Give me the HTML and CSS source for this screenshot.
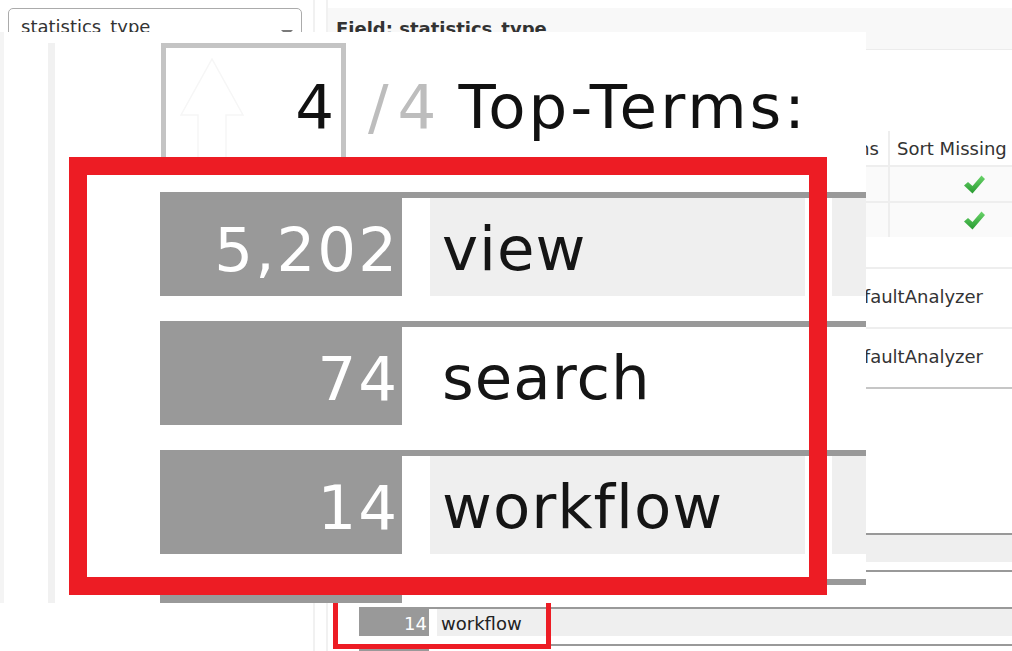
FILE: index.html
```html
<!DOCTYPE html>
<html lang="en">
<head>
<meta charset="utf-8">
<title>Schema Browser – statistics_type</title>
<link rel="stylesheet" href="styles.css">
</head>
<body>
<div class="page">
  <aside class="sidebar">
    <div class="select"><span>statistics_type</span><span class="caret"></span></div>
  </aside>
  <main class="main">
    <div class="field-head">Field: statistics_type</div>

    <div class="flags">
      <div class="fh"></div>
      <div class="fh omit">Omit Norms</div>
      <div class="fh sep">Sort Missing</div>
      <div class="fc"></div>
      <div class="fc"></div>
      <div class="fc sep check"><svg width="21" height="19" viewBox="0 0 21 19"><defs><linearGradient id="g1" x1="0" y1="0" x2="0" y2="1"><stop offset="0" stop-color="#6ad46a"/><stop offset="1" stop-color="#279a30"/></linearGradient></defs><path d="M0 10.5 L4 7 L8.5 11 L17.5 0.5 L21 4 L8.5 18.5 Z" fill="url(#g1)"/></svg></div>
      <div class="fc"></div>
      <div class="fc"></div>
      <div class="fc sep check"><svg width="21" height="19" viewBox="0 0 21 19"><defs><linearGradient id="g2" x1="0" y1="0" x2="0" y2="1"><stop offset="0" stop-color="#6ad46a"/><stop offset="1" stop-color="#279a30"/></linearGradient></defs><path d="M0 10.5 L4 7 L8.5 11 L17.5 0.5 L21 4 L8.5 18.5 Z" fill="url(#g2)"/></svg></div>
    </div>

    <div class="analyzers">
      <div class="an-row"><span class="an-value">DefaultAnalyzer</span></div>
      <div class="an-row last"><span class="an-value">DefaultAnalyzer</span></div>
    </div>

    <div class="terms-head"></div>
    <ul class="terms">
      <li class="odd"><span class="count"></span><div class="rest"><span class="term"></span></div></li>
      <li><span class="count"></span><div class="rest"><span class="term"></span></div></li>
      <li class="odd"><span class="count">14</span><div class="rest"><span class="term">workflow</span></div></li>
      <li><span class="count"></span><div class="rest"><span class="term"></span></div></li>
    </ul>
  </main>
</div>

<div class="mark-small"></div>

<div class="zoom-overlay">
  <div class="ov-rail"><div class="ov-rail-line"></div></div>
  <div class="ov-body">
    <div class="ov-head">
      <div class="ov-box">
        <svg class="ghost" width="64" height="107" viewBox="0 0 64 107"><path d="M18 107 V57 H1 L32 1 L63 57 H46 V107" fill="none" stroke="#f6f6f6" stroke-width="1.5"/></svg>
        <span class="ov-num">4</span>
      </div>
      <span class="ov-of">/4</span>
      <span class="ov-title">Top-Terms:</span>
    </div>
    <ul class="ov-terms">
      <li class="odd"><span class="ov-count">5,202</span><div class="ov-rest"><span class="ov-term">view</span><span class="ov-term2"></span></div></li>
      <li><span class="ov-count">74</span><div class="ov-rest"><span class="ov-term">search</span><span class="ov-term2"></span></div></li>
      <li class="odd"><span class="ov-count">14</span><div class="ov-rest"><span class="ov-term">workflow</span><span class="ov-term2"></span></div></li>
      <li><span class="ov-count"></span><div class="ov-rest"><span class="ov-term"></span><span class="ov-term2"></span></div></li>
    </ul>
  </div>
  <div class="ov-mark"></div>
</div>
</body>
</html>
```

FILE: styles.css
```css
* { box-sizing: border-box; }

html, body {
  margin: 0;
  padding: 0;
  background: #fff;
}

body {
  width: 1012px;
  height: 651px;
  overflow: hidden;
  position: relative;
  font-family: "DejaVu Sans", Verdana, sans-serif;
  font-size: 18px;
  line-height: 21px;
  color: #333;
}

.page {
  display: flex;
  height: 651px;
}

/* ---------- sidebar ---------- */
.sidebar {
  width: 315px;
  flex: none;
  padding: 8px 11px 0 8px;
  border-right: 2px solid #f1f1f1;
}

.select {
  height: 40px;
  border: 1px solid #ababab;
  border-radius: 5px;
  padding: 7px 8px 0 12px;
  display: flex;
  justify-content: space-between;
  align-items: flex-start;
  background: #fff;
  color: #333;
}

.caret {
  margin-top: 14px;
  width: 0;
  height: 0;
  border-top: 6px solid #7a7a7a;
  border-left: 6px solid transparent;
  border-right: 6px solid transparent;
}

/* ---------- main ---------- */
.main {
  flex: 1;
  margin-left: 11px;
  border-left: 2px solid #f1f1f1;
  min-width: 0;
}

.field-head {
  margin-top: 8px;
  height: 42px;
  background: #f8f8f8;
  border-bottom: 1px solid #ececec;
  padding: 11px 0 0 8px;
  font-weight: bold;
  font-size: 18px;
  line-height: 20px;
  color: #333;
}

.flags {
  margin-top: 81px;
  display: grid;
  grid-template-columns: 1fr 130px 124px;
}

.fh {
  height: 36px;
  padding-top: 7px;
  border-bottom: 2px solid #eeeeee;
  white-space: nowrap;
  color: #333;
}

.fh.omit {
  text-align: right;
  padding-right: 9px;
}

.sep {
  border-left: 2px solid #eeeeee;
  padding-left: 7px;
}

.fc {
  height: 36px;
  background: #fafafa;
  border-bottom: 2px solid #eeeeee;
}

.fc:nth-last-child(-n+3) {
  height: 34px;
  border-bottom: none;
}

.fc.check {
  padding-left: 74px;
  padding-top: 8px;
}

.fc.check svg { display: block; }

.analyzers {
  margin-top: 30px;
}

.an-row {
  height: 60px;
  border-top: 2px solid #eeeeee;
  display: flex;
  padding-top: 17px;
  white-space: nowrap;
}

.an-row.last {
  height: 62px;
  border-bottom: 2px solid #c6c6c6;
}

.an-value {
  flex: 1;
  text-align: right;
  padding-right: 29px;
  overflow: hidden;
}

.terms-head {
  margin-top: 98px;
  margin-bottom: 9px;
  height: 37px;
}

.terms {
  list-style: none;
  margin: 0;
  padding: 0 0 0 31px;
}

.terms li {
  display: flex;
  align-items: flex-start;
  height: 37px;
}

.count {
  flex: none;
  width: 70px;
  height: 29px;
  background: #999;
  color: #fff;
  text-align: right;
  padding: 6px 2px 0 0;
}

.rest {
  flex: 1;
  height: 29px;
  border-top: 2px solid #999;
  padding-left: 8px;
  display: flex;
}

.term {
  flex: 1;
  height: 27px;
  padding: 4px 0 0 4px;
  color: #222;
}

.terms li.odd .term { background: #efefef; }

/* small annotation box in the page */
.mark-small {
  position: absolute;
  left: 333px;
  top: 525px;
  width: 218px;
  height: 124px;
  border: 5px solid #ed1c24;
}

/* ---------- magnified overlay ---------- */
.zoom-overlay {
  position: absolute;
  left: 0;
  top: 32px;
  width: 866px;
  height: 571px;
  overflow: hidden;
  background: #fff;
  display: flex;
}

.ov-rail {
  flex: none;
  width: 55px;
  border-left: 4px solid #f4f4f4;
}

.ov-rail-line {
  margin-left: 44px;
  margin-top: 11px;
  width: 7px;
  height: 100%;
  background: #f1f1f1;
}

.ov-body {
  flex: 1;
  padding-left: 105px;
  font-size: 61px;
  line-height: 71px;
  color: #111;
}

.ov-head {
  margin-top: 11px;
  height: 127px;
  display: flex;
  align-items: flex-start;
  white-space: nowrap;
}

.ov-box {
  flex: none;
  margin-left: 1px;
  width: 185px;
  height: 127px;
  border: 5px solid #c4c4c4;
  padding: 10px 7px 0 14px;
  display: flex;
  justify-content: space-between;
  align-items: flex-start;
  overflow: hidden;
}

.ghost { flex: none; display: block; }

.ov-num {
  margin-top: 13px;
  color: #111;
}

.ov-of {
  margin-left: 22px;
  margin-top: 28px;
  letter-spacing: 9px;
  color: #bdbdbd;
}

.ov-title {
  margin-left: 13px;
  margin-top: 28px;
  letter-spacing: 3px;
  color: #111;
}

.ov-terms {
  list-style: none;
  margin: 22px 0 0 0;
  padding: 0;
}

.ov-terms li {
  display: flex;
  align-items: flex-start;
  height: 129px;
}

.ov-count {
  flex: none;
  width: 242px;
  height: 104px;
  background: #999;
  color: #fff;
  text-align: right;
  letter-spacing: 2px;
  padding: 22px 3px 0 0;
}

.ov-rest {
  flex: 1;
  height: 104px;
  border-top: 6px solid #999;
  padding-left: 28px;
  display: flex;
}

.ov-term {
  flex: none;
  width: 375px;
  height: 98px;
  padding: 15px 0 0 12px;
  letter-spacing: 1px;
  color: #151515;
}

.ov-term2 {
  flex: 1;
  margin-left: 27px;
  height: 98px;
}

.ov-terms li.odd .ov-term,
.ov-terms li.odd .ov-term2 { background: #efefef; }

.ov-mark {
  position: absolute;
  left: 69px;
  top: 125px;
  width: 758px;
  height: 438px;
  border: 18px solid #ed1c24;
}
```
